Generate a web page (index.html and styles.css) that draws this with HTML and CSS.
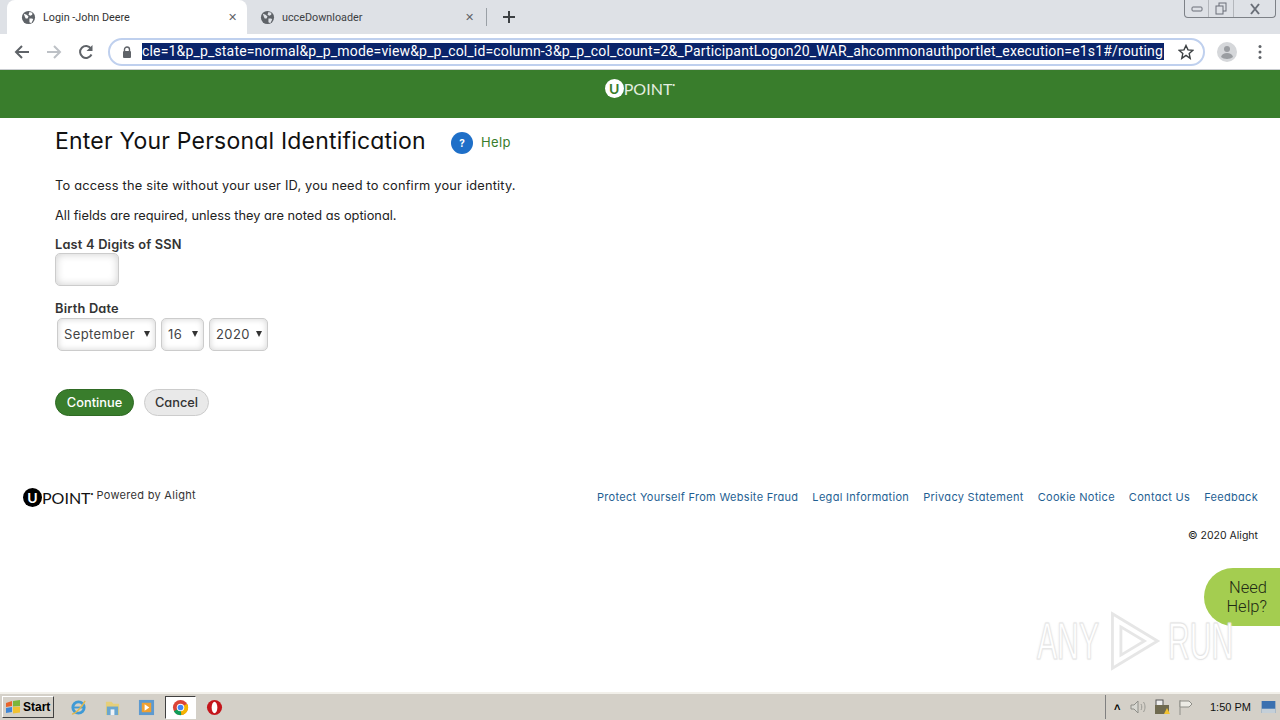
FILE: index.html

```html
<!DOCTYPE html>
<html lang="en">
<head>
    <meta charset="UTF-8">
    <meta name="viewport" content="width=device-width, initial-scale=1.0">
    <title>Login -John Deere</title>
    <link rel="stylesheet" href="styles.css">
</head>
<body>
    <div class="screen">
        <div class="tabstrip">
            <div class="tab tab-active">
                <svg class="globe" viewBox="0 0 16 16"><circle cx="8" cy="8" r="7" fill="#5f6368"/><path d="M3 4l3 1 2 2-1 2-2 0-1-2zM9 2l3 1 0 2-2 1-2-1zM9 9l3 0 1 1-2 4-2-1z" fill="#fff"/></svg>
                <span class="tab-title">Login -John Deere</span>
                <span class="tab-close">&#x2715;</span>
            </div>
            <div class="tab">
                <svg class="globe" viewBox="0 0 16 16"><circle cx="8" cy="8" r="7" fill="#5f6368"/><path d="M3 4l3 1 2 2-1 2-2 0-1-2zM9 2l3 1 0 2-2 1-2-1zM9 9l3 0 1 1-2 4-2-1z" fill="#dee1e6"/></svg>
                <span class="tab-title">ucceDownloader</span>
                <span class="tab-close">&#x2715;</span>
            </div>
            <div class="tab-sep"></div>
            <svg class="new-tab" viewBox="0 0 14 14"><path d="M7 1v12M1 7h12" stroke="#3c4043" stroke-width="2" fill="none"/></svg>
            <div class="win-controls">
                <span class="win-btn win-min"><svg viewBox="0 0 12 8" width="12" height="8"><rect x="1" y="2" width="10" height="4" rx="1" fill="none" stroke="#6a6f78"/></svg></span>
                <span class="win-btn win-restore"><svg viewBox="0 0 12 13" width="12" height="13"><rect x="4" y="1" width="7" height="8" fill="none" stroke="#6a6f78"/><rect x="1" y="4" width="7" height="8" fill="#dee1e6" stroke="#6a6f78"/></svg></span>
                <span class="win-btn win-close"><svg viewBox="0 0 12 12" width="12" height="12"><path d="M2 1l8 10M10 1L2 11" stroke="#6a6f78" stroke-width="2" fill="none"/></svg></span>
            </div>
        </div>

        <div class="toolbar">
            <svg class="nav-icon" viewBox="0 0 16 16"><path d="M15 8H2M8 2L2 8l6 6" stroke="#5f6368" stroke-width="2" fill="none"/></svg>
            <svg class="nav-icon" viewBox="0 0 16 16"><path d="M1 8h13M8 2l6 6-6 6" stroke="#bdc1c6" stroke-width="2" fill="none"/></svg>
            <svg class="nav-icon" viewBox="0 0 16 16"><path d="M13.5 10.5A6 6 0 1 1 13 4.5" stroke="#5f6368" stroke-width="2" fill="none"/><path d="M14.5 1v6h-6z" fill="#5f6368"/></svg>
            <div class="omnibox">
                <svg class="lock" viewBox="0 0 10 12"><path d="M2.5 5V3.5a2.5 2.5 0 0 1 5 0V5" stroke="#5f6368" stroke-width="1.4" fill="none"/><rect x="1" y="5" width="8" height="7" rx="1" fill="#5f6368"/></svg>
                <span class="url">cle=1&amp;p_p_state=normal&amp;p_p_mode=view&amp;p_p_col_id=column-3&amp;p_p_col_count=2&amp;_ParticipantLogon20_WAR_ahcommonauthportlet_execution=e1s1#/routing</span>
                <svg class="star" viewBox="0 0 16 16"><path d="M8 1.500l2 4.400 4.700.5-3.500 3.200 1 4.700L8 11.400l-4.200 2.900 1-4.700L1.300 6.400l4.700-.5z" stroke="#3c4043" stroke-width="1.400" fill="none"/></svg>
            </div>
            <svg class="avatar" viewBox="0 0 20 20"><circle cx="10" cy="10" r="10" fill="#d5d7da"/><circle cx="10" cy="7" r="3" fill="#9a9da1"/><path d="M4 15c1-3 3-4 6-4s5 1 6 4c-3 2.500-9 2.500-12 0z" fill="#9a9da1"/></svg>
            <svg class="menu" viewBox="0 0 4 16"><circle cx="2" cy="2.500" r="1.500" fill="#5f6368"/><circle cx="2" cy="8" r="1.500" fill="#5f6368"/><circle cx="2" cy="13.500" r="1.500" fill="#5f6368"/></svg>
        </div>

        <div class="banner">
            <span class="logo logo-light"><span class="logo-u">U</span>POINT<sup>&#8226;</sup></span>
        </div>

        <div class="main">
            <div class="title-row">
                <h1>Enter Your Personal Identification</h1>
                <span class="help-icon">?</span>
                <a class="help-link">Help</a>
            </div>
            <p class="intro">To access the site without your user ID, you need to confirm your identity.</p>
            <p class="note">All fields are required, unless they are noted as optional.</p>
            <label class="field-label">Last 4 Digits of SSN</label>
            <div class="ssn-input"></div>
            <label class="field-label birth-label">Birth Date</label>
            <div class="date-row">
                <div class="select select-month">September<i></i></div>
                <div class="select select-day">16<i></i></div>
                <div class="select select-year">2020<i></i></div>
            </div>
            <div class="actions">
                <button class="btn btn-primary">Continue</button>
                <button class="btn btn-cancel">Cancel</button>
            </div>
        </div>

        <div class="footer">
            <div class="footer-top">
                <span class="logo logo-dark"><span class="logo-u">U</span>POINT<sup>&#8226;</sup></span>
                <span class="powered">Powered by Alight</span>
                <div class="footer-links">
                    <a>Protect Yourself From Website Fraud</a>
                    <a>Legal Information</a>
                    <a>Privacy Statement</a>
                    <a>Cookie Notice</a>
                    <a>Contact Us</a>
                    <a>Feedback</a>
                </div>
            </div>
            <div class="copyright">&copy; 2020 Alight</div>
        </div>

        <div class="taskbar">
            <div class="start-btn">
                <svg class="start-flag" viewBox="0 0 16 14"><path d="M1 3l6-2v5l-6 1z" fill="#e8642c"/><path d="M8 1l7-1v6l-7 .5z" fill="#7cb63a"/><path d="M1 8l6-1v5l-6 1z" fill="#3f86d6"/><path d="M8 7l7-.5v6l-7 1z" fill="#f2c230"/></svg>
                Start
            </div>
            <div class="quick-launch">
                <svg class="task-icon" viewBox="0 0 18 18"><circle cx="9" cy="9" r="6" fill="none" stroke="#3f9ad6" stroke-width="3"/><path d="M4 9h11" stroke="#3f9ad6" stroke-width="2"/><path d="M2 16c3 0 10-6 14-14" stroke="#e2b84a" stroke-width="1.5" fill="none"/></svg>
                <svg class="task-icon" viewBox="0 0 18 18"><path d="M2 3h6l2 2h6v12H2z" fill="#e6cf7a"/><rect x="3" y="8" width="12" height="9" fill="#6aa6cf"/><rect x="7" y="11" width="4" height="6" fill="#eef3f7"/></svg>
                <svg class="task-icon" viewBox="0 0 18 18"><rect x="1" y="1" width="16" height="16" fill="#5d9ad0"/><rect x="4" y="4" width="10" height="10" fill="#f0a030"/><path d="M7 5.500l5 3.500-5 3.500z" fill="#fff"/></svg>
                <div class="task-active">
                    <svg class="task-icon" viewBox="0 0 18 18"><circle cx="9" cy="9" r="8" fill="#db4437"/><path d="M9 9L2 13a8 8 0 0 0 8 4z" fill="#0f9d58"/><path d="M9 9l1 8a8 8 0 0 0 6-12z" fill="#f4b400"/><circle cx="9" cy="9" r="4" fill="#fff"/><circle cx="9" cy="9" r="3" fill="#4285f4"/></svg>
                </div>
                <svg class="task-icon" viewBox="0 0 18 18"><circle cx="9" cy="9" r="8" fill="#c4161c"/><ellipse cx="9" cy="9" rx="3" ry="6" fill="#fff"/></svg>
            </div>
            <div class="tray">
                <span class="tray-arrow">&#x2C4;</span>
                <svg class="tray-icon" viewBox="0 0 18 16"><path d="M2 6h3l4-4v12l-4-4H2z" fill="#d8d8d2" stroke="#8e8e88"/><path d="M12 5c1 2 1 4 0 6M14.500 3c2 3 2 7 0 10" stroke="#9a9a94" fill="none"/></svg>
                <svg class="tray-icon" viewBox="0 0 18 16"><rect x="3" y="1" width="7" height="8" fill="#eee" stroke="#555"/><rect x="2" y="6" width="14" height="9" fill="#6f6a50"/><path d="M11 15l3-6 3 6z" fill="#f2c230"/></svg>
                <svg class="tray-icon" viewBox="0 0 18 16"><path d="M3 1v15" stroke="#8e8e88"/><path d="M3 2h9l3 3-3 3H3z" fill="#ecebe5" stroke="#8e8e88"/></svg>
                <span class="clock">1:50 PM</span>
                <svg class="show-desktop" viewBox="0 0 16 14"><rect width="16" height="14" fill="#3a70b0"/><rect y="9" width="16" height="5" fill="#c4cfd8"/></svg>
            </div>
        </div>

        <div class="need-help">Need<br>Help?</div>
        <div class="watermark">
            <span class="wm-text wm-any">ANY</span>
            <svg class="wm-play" viewBox="0 0 60 66"><path d="M6 4l48 29L6 62zM15 18l25 15-25 15z" fill="none" stroke="#e6e6e6" stroke-width="3"/></svg>
            <span class="wm-text wm-run">RUN</span>
        </div>
    </div>
</body>
</html>
```

FILE: styles.css

```css
* {
    box-sizing: border-box;
}

html, body {
    margin: 0;
    padding: 0;
    height: 100%;
    overflow: hidden;
}

body {
    font-family: "Inter", Arial, sans-serif;
    font-feature-settings: "cv11";
    background-color: #fff;
    color: #222;
}

.screen {
    position: relative;
    width: 1280px;
    height: 720px;
    display: flex;
    flex-direction: column;
}

/* browser chrome */
.tabstrip {
    position: relative;
    height: 34px;
    background-color: #dee1e6;
    display: flex;
    align-items: flex-end;
    padding-left: 7px;
}

.tab {
    width: 240px;
    height: 34px;
    display: flex;
    align-items: center;
    padding-left: 14px;
    padding-right: 10px;
    font-family: "Roboto", sans-serif;
    font-size: 10.8px;
    color: #3c4043;
}

.tab + .tab {
    padding-left: 13px;
    padding-right: 12px;
    width: 239px;
}

.tab-active {
    background-color: #fff;
    border-radius: 8px 8px 0 0;
    color: #333;
}

.globe {
    width: 15px;
    height: 15px;
    margin-right: 7px;
    flex-shrink: 0;
}

.tab-title {
    flex: 1;
}

.tab-close {
    font-size: 11px;
    color: #5f6368;
}

.tab-sep {
    width: 1px;
    height: 18px;
    background-color: #9aa0a6;
    margin-bottom: 8px;
}

.new-tab {
    width: 14px;
    height: 14px;
    margin-left: 15px;
    margin-bottom: 10px;
}

.win-controls {
    position: absolute;
    top: 0;
    left: 1184px;
    width: 92px;
    height: 18px;
    display: flex;
    border: 1px solid #7d8187;
    border-top: none;
    border-radius: 0 0 4px 4px;
}

.win-btn {
    display: flex;
    align-items: center;
    justify-content: center;
}

.win-min {
    width: 24px;
    border-right: 1px solid #b4b7bc;
}

.win-restore {
    width: 25px;
    border-right: 1px solid #b4b7bc;
}

.win-close {
    flex: 1;
}

.toolbar {
    height: 36px;
    background-color: #fff;
    display: flex;
    align-items: center;
    padding-left: 14px;
    border-bottom: 1px solid #c9ccd0;
}

.nav-icon {
    width: 16px;
    height: 16px;
    margin-right: 16px;
}

.omnibox {
    width: 1097px;
    height: 28px;
    margin-left: -2px;
    border: 2px solid #bfd0ee;
    border-radius: 14px;
    display: flex;
    align-items: center;
    padding-left: 12px;
}

.lock {
    width: 10px;
    height: 12px;
    margin-right: 10px;
}

.url {
    width: 1022px;
    height: 17px;
    line-height: 17px;
    background-color: #0a246a;
    color: #fff;
    font-family: "Roboto", sans-serif;
    font-size: 14px;
    letter-spacing: 0.17px;
    white-space: nowrap;
    overflow: hidden;
}

.star {
    width: 16px;
    height: 16px;
    margin-left: 14px;
}

.avatar {
    width: 20px;
    height: 20px;
    margin-left: 12px;
}

.menu {
    width: 4px;
    height: 16px;
    margin-left: 21px;
}

.banner {
    height: 48px;
    background-color: #397d2c;
    display: flex;
    justify-content: center;
    padding-top: 8px;
}

/* logo */
.logo {
    display: inline-flex;
    align-items: center;
    height: 20px;
    font-family: "Lato", sans-serif;
    font-weight: 400;
    font-size: 16px;
}

.logo sup {
    font-size: 5px;
    align-self: flex-start;
    margin-top: 4px;
}

.logo-u {
    width: 19px;
    height: 19px;
    border-radius: 50%;
    display: inline-flex;
    align-items: center;
    justify-content: center;
    font-size: 14px;
    font-weight: 700;
}

.logo-light {
    color: #e4eee0;
}

.logo-light .logo-u {
    background-color: #fff;
    color: #397d2c;
}

.logo-dark {
    color: #111;
}

.logo-dark .logo-u {
    background-color: #000;
    color: #fff;
}

/* form */
.main {
    padding-left: 55px;
    height: 369px;
}

.title-row {
    display: flex;
    align-items: center;
    height: 46px;
}

h1 {
    margin: 0;
    font-size: 23px;
    font-weight: 400;
    letter-spacing: 0.2px;
    color: #111;
    width: 396px;
    white-space: nowrap;
}

.help-icon {
    width: 22px;
    height: 22px;
    margin-top: 4px;
    border-radius: 50%;
    background-color: #1e6fc8;
    color: #fff;
    font-size: 10px;
    font-weight: 700;
    display: flex;
    align-items: center;
    justify-content: center;
}

.help-link {
    margin-left: 8px;
    margin-top: 2px;
    font-size: 13px;
    letter-spacing: 0.4px;
    color: #397d2c;
}

p {
    margin: 0;
    font-size: 12.8px;
    color: #222;
}

.intro {
    margin-top: 13px;
    line-height: 18px;
    letter-spacing: 0.2px;
}

.note {
    margin-top: 12px;
    line-height: 18px;
}

.field-label {
    display: block;
    margin-top: 12px;
    font-size: 12.8px;
    font-weight: 600;
    letter-spacing: 0.2px;
    line-height: 16px;
    color: #333;
}

.birth-label {
    margin-top: 15px;
}

.ssn-input {
    width: 64px;
    height: 33px;
    border: 1px solid #ccc;
    border-radius: 5px;
    background-color: #fff;
    box-shadow: inset 0 0 8px rgba(0, 0, 0, 0.2);
}

.date-row {
    display: flex;
    gap: 5px;
    margin-left: 2px;
    margin-top: 1px;
}

.select {
    position: relative;
    height: 33px;
    line-height: 31px;
    padding-left: 6px;
    border: 1px solid #ccc;
    border-radius: 5px;
    font-size: 13px;
    letter-spacing: 0.4px;
    color: #444;
    box-shadow: inset 0 0 6px rgba(0, 0, 0, 0.18);
}

.select i {
    position: absolute;
    top: 12px;
    right: 5px;
    border-left: 3.5px solid transparent;
    border-right: 3.5px solid transparent;
    border-top: 6px solid #333;
}

.select-month {
    width: 99px;
}

.select-day {
    width: 43px;
}

.select-year {
    width: 59px;
}

.actions {
    display: flex;
    gap: 10px;
    margin-top: 38px;
}

.btn {
    height: 27px;
    border-radius: 14px;
    font-family: "Inter", sans-serif;
    font-feature-settings: "cv11";
    font-size: 12.8px;
    font-weight: 500;
    padding: 0;
}

.btn-primary {
    width: 79px;
    background-color: #397d2c;
    border: 1px solid #2f6a24;
    color: #fff;
}

.btn-cancel {
    width: 65px;
    background-color: #e9e9e9;
    border: 1px solid #ccc;
    color: #333;
}

/* footer */
.footer {
    padding: 0 22px 0 23px;
}

.footer-top {
    display: flex;
    align-items: center;
    height: 20px;
}

.powered {
    font-size: 11px;
    letter-spacing: 0.3px;
    margin-left: 3px;
    margin-top: -4px;
    color: #333;
}

.footer-links {
    margin-left: auto;
    display: flex;
    gap: 14px;
    font-size: 11px;
    letter-spacing: 0.3px;
    color: #1f5f93;
}

.copyright {
    margin-top: 22px;
    text-align: right;
    font-size: 10.5px;
    color: #222;
}

/* taskbar */
.taskbar {
    margin-top: auto;
    height: 28px;
    background-color: #d4d0c8;
    border-top: 2px solid #f2f0ea;
    display: flex;
    align-items: center;
    padding: 0 2px;
}

.start-btn {
    width: 52px;
    height: 22px;
    display: flex;
    align-items: center;
    gap: 2px;
    padding-left: 2px;
    font-family: "Liberation Sans", sans-serif;
    font-size: 12px;
    font-weight: 700;
    color: #000;
    border: 1px solid;
    border-color: #fff #404040 #404040 #fff;
}

.start-flag {
    width: 16px;
    height: 14px;
}

.quick-launch {
    display: flex;
    align-items: center;
    gap: 17px;
    margin-left: 16px;
}

.task-icon {
    width: 17px;
    height: 17px;
    display: block;
}

.task-active {
    width: 31px;
    height: 23px;
    margin: 0 -7px;
    background-color: #fff;
    border: 1px solid;
    border-color: #404040 #fff #fff #404040;
    display: flex;
    align-items: center;
    justify-content: center;
}

.tray {
    margin-left: auto;
    height: 24px;
    width: 173px;
    display: flex;
    align-items: center;
    padding-left: 8px;
    border-left: 1px solid #808080;
    font-family: "Liberation Sans", sans-serif;
}

.tray-arrow {
    font-size: 11px;
    font-weight: 700;
    width: 15px;
    color: #000;
}

.tray-icon {
    width: 18px;
    height: 16px;
    margin-right: 6px;
}

.clock {
    font-size: 11px;
    margin-left: 9px;
    color: #111;
}

.show-desktop {
    width: 15px;
    height: 12px;
    margin-left: 10px;
}

/* overlays */
.need-help {
    position: absolute;
    top: 568px;
    left: 1204px;
    width: 76px;
    height: 58px;
    padding: 10px 13px 0 0;
    text-align: right;
    background-color: #a4cd50;
    border-radius: 32px 0 0 32px;
    font-family: "Roboto", sans-serif;
    font-weight: 300;
    font-size: 16.5px;
    line-height: 19px;
    color: #1f2a14;
}

.watermark {
    position: absolute;
    top: 610px;
    left: 1037px;
    width: 196px;
    height: 62px;
    display: flex;
    align-items: center;
    font-family: "Liberation Sans", sans-serif;
    pointer-events: none;
}

.wm-text {
    display: inline-block;
    font-size: 52px;
    line-height: 62px;
    color: #fff;
    -webkit-text-stroke: 1px #e4e4e4;
    text-shadow: 0 0 3px #ddd;
    transform-origin: left center;
    transform: scaleX(0.58);
}

.wm-any {
    width: 68px;
}

.wm-run {
    width: 65px;
    margin-left: 3px;
}

.wm-play {
    width: 60px;
    height: 62px;
}
```
